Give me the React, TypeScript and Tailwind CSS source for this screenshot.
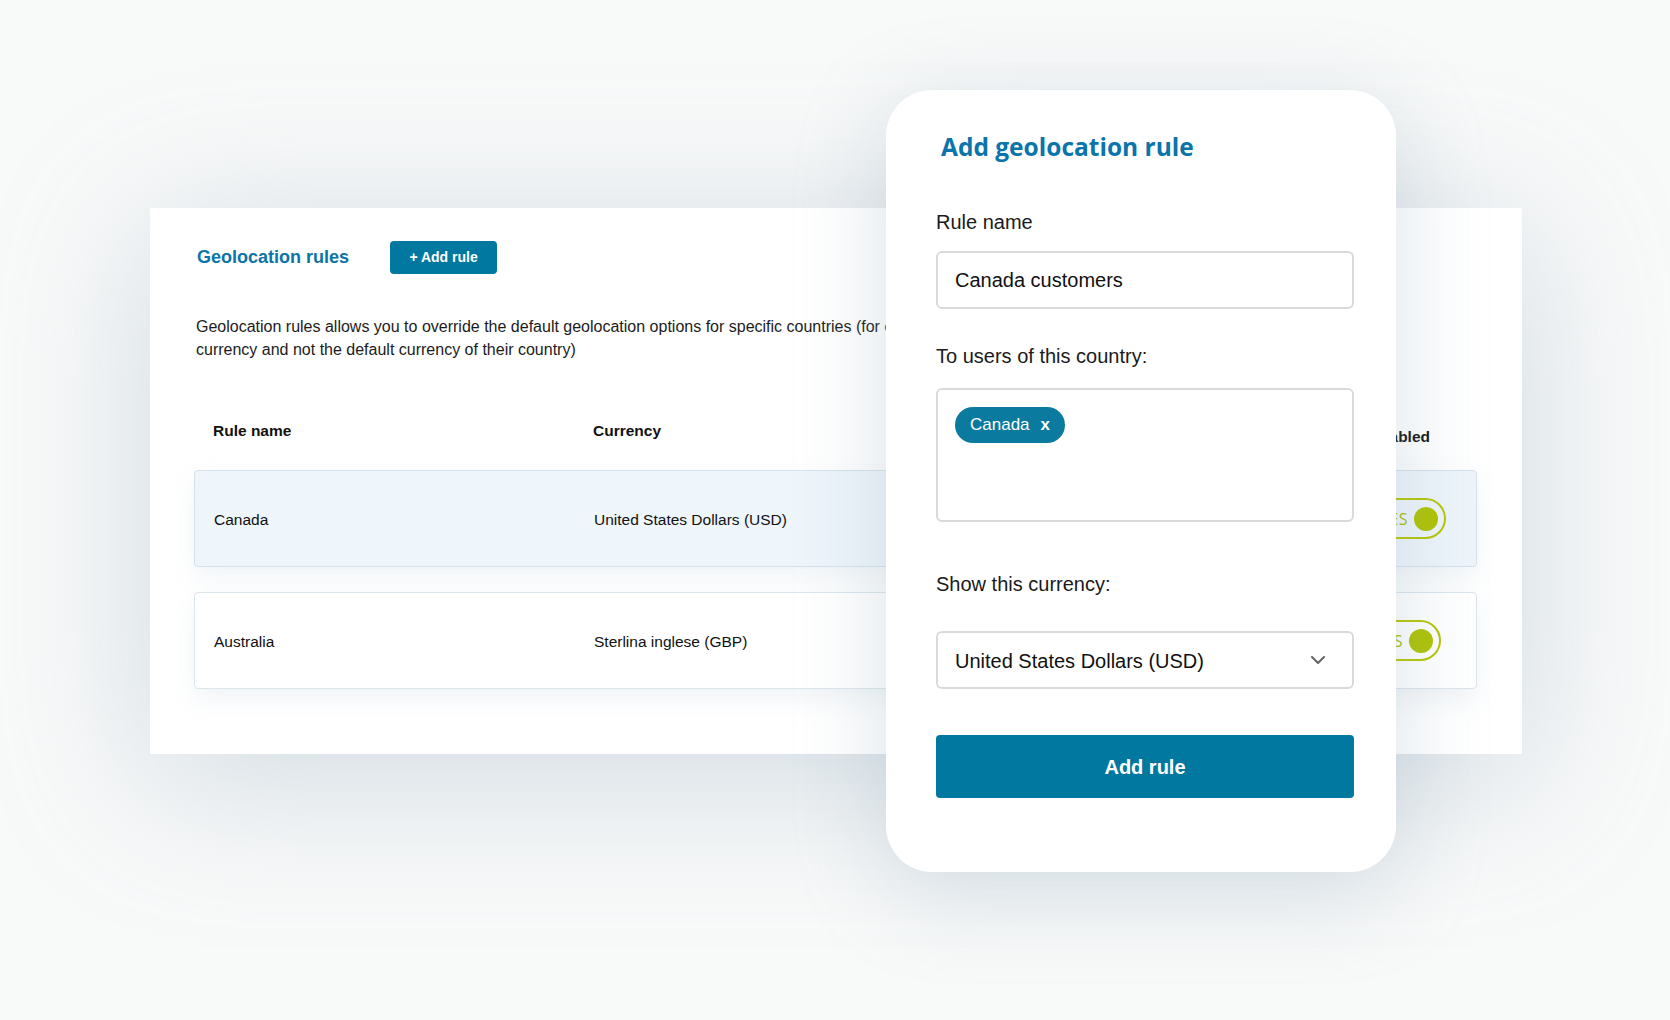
import React from "react";

function Toggle({ pr }: { pr: string }) {
  return (
    <div className={`flex h-full items-center ${pr}`}>
      <div className="flex h-[41px] w-[92px] items-center justify-end rounded-full border-2 border-[#b4c600] pr-[6px]">
        <span className="text-[16px] tracking-[0.5px] text-[#a6ba00] font-['Open_Sans',sans-serif]">YES</span>
        <span className="ml-[6px] h-[24px] w-[24px] rounded-full bg-[#aec200]" />
      </div>
    </div>
  );
}

function Row({ name, currency, bg, border, pr }: { name: string; currency: string; bg: string; border: string; pr: string }) {
  return (
    <div className={`flex h-[97px] items-center rounded-[4px] border ${bg} ${border} shadow-[0_10px_24px_rgba(160,185,205,0.16)]`}>
      <div className="w-[399px] pl-[19px] pt-[3px] text-[15.5px] text-[#111]">{name}</div>
      <div className="flex-1 pt-[3px] text-[15.5px] text-[#111]">{currency}</div>
      <Toggle pr={pr} />
    </div>
  );
}

export default function App() {
  return (
    <div className="relative h-[1020px] w-[1670px] overflow-hidden bg-[#f8f9f9] pl-[150px] pt-[208px] font-['Liberation_Sans',Arial,sans-serif]">
      {/* background panel */}
      <div className="h-[546px] w-[1372px] bg-white pl-[44px] pr-[45px] pt-[33px] shadow-[0_24px_140px_rgba(150,172,190,0.4)]">
        <div className="flex items-center gap-[41px] pl-[3px]">
          <h2 className="text-[18px] font-bold leading-[33px] text-[#0b74a8]">Geolocation rules</h2>
          <button className="h-[33px] w-[107px] rounded-[4px] bg-[#00789f] text-[14px] font-bold text-white">+ Add rule</button>
        </div>
        <p className="mt-[41px] pl-[2px] text-[16px] leading-[23px] text-[#1c1c1c] whitespace-nowrap">
          Geolocation rules allows you to override the default geolocation options for specific countries (for example, to show users of a specific country a different
          <br />
          currency and not the default currency of their country)
        </p>
        <div className="mt-[60px] flex h-[20px] items-start text-[15.5px] font-bold leading-[20px] text-[#111]">
          <div className="w-[399px] pl-[19px]">Rule name</div>
          <div className="flex-1">Currency</div>
          <div className="mt-[6px] pr-[47px]">Enabled</div>
        </div>
        <div className="mt-[29px]">
          <Row name="Canada" currency="United States Dollars (USD)" bg="bg-[#eef5fb]" border="border-[#d3e2ec]" pr="pr-[30px]" />
        </div>
        <div className="mt-[25px]">
          <Row name="Australia" currency="Sterlina inglese (GBP)" bg="bg-white" border="border-[#dbe5ec]" pr="pr-[35px]" />
        </div>
      </div>

      {/* modal */}
      <div className="absolute left-[886px] top-[90px] h-[782px] w-[510px] rounded-[46px] bg-white pl-[50px] pt-[44px] shadow-[0_20px_90px_rgba(140,165,185,0.32)]">
        <h1 className="ml-[5px] text-[24.5px] font-bold leading-[26px] text-[#0b74ab] font-['Open_Sans',sans-serif]">Add geolocation rule</h1>
        <div className="mt-[50px] text-[20px] leading-[24px] text-[#1a1a1a]">Rule name</div>
        <div className="mt-[17px] flex h-[58px] w-[418px] items-center rounded-[6px] border-2 border-[#dadada] pl-[17px] text-[20px] text-[#111]">
          Canada customers
        </div>
        <div className="mt-[35px] text-[20px] leading-[24px] text-[#1a1a1a]">To users of this country:</div>
        <div className="mt-[20px] h-[134px] w-[418px] rounded-[6px] border-2 border-[#dadada] pl-[17px] pt-[17px]">
          <div className="inline-flex h-[36px] items-center rounded-full bg-[#0a7a9e] pl-[15px] pr-[15px] text-[17px] text-white">
            <span>Canada</span>
            <span className="ml-[11px] font-bold">x</span>
          </div>
        </div>
        <div className="mt-[50px] text-[20px] leading-[24px] text-[#1a1a1a]">Show this currency:</div>
        <div className="mt-[35px] flex h-[58px] w-[418px] items-center justify-between rounded-[6px] border-2 border-[#dadada] pl-[17px] pr-[27px] text-[20px] text-[#111]">
          <span className="pt-[2px]">United States Dollars (USD)</span>
          <svg width="14" height="8" viewBox="0 0 14 8" fill="none">
            <path d="M1 1 L7 7 L13 1" stroke="#666" strokeWidth="2" strokeLinecap="round" strokeLinejoin="round" />
          </svg>
        </div>
        <button className="mt-[46px] h-[63px] w-[418px] rounded-[4px] bg-[#00789f] text-[20px] font-bold text-white">Add rule</button>
      </div>
    </div>
  );
}
